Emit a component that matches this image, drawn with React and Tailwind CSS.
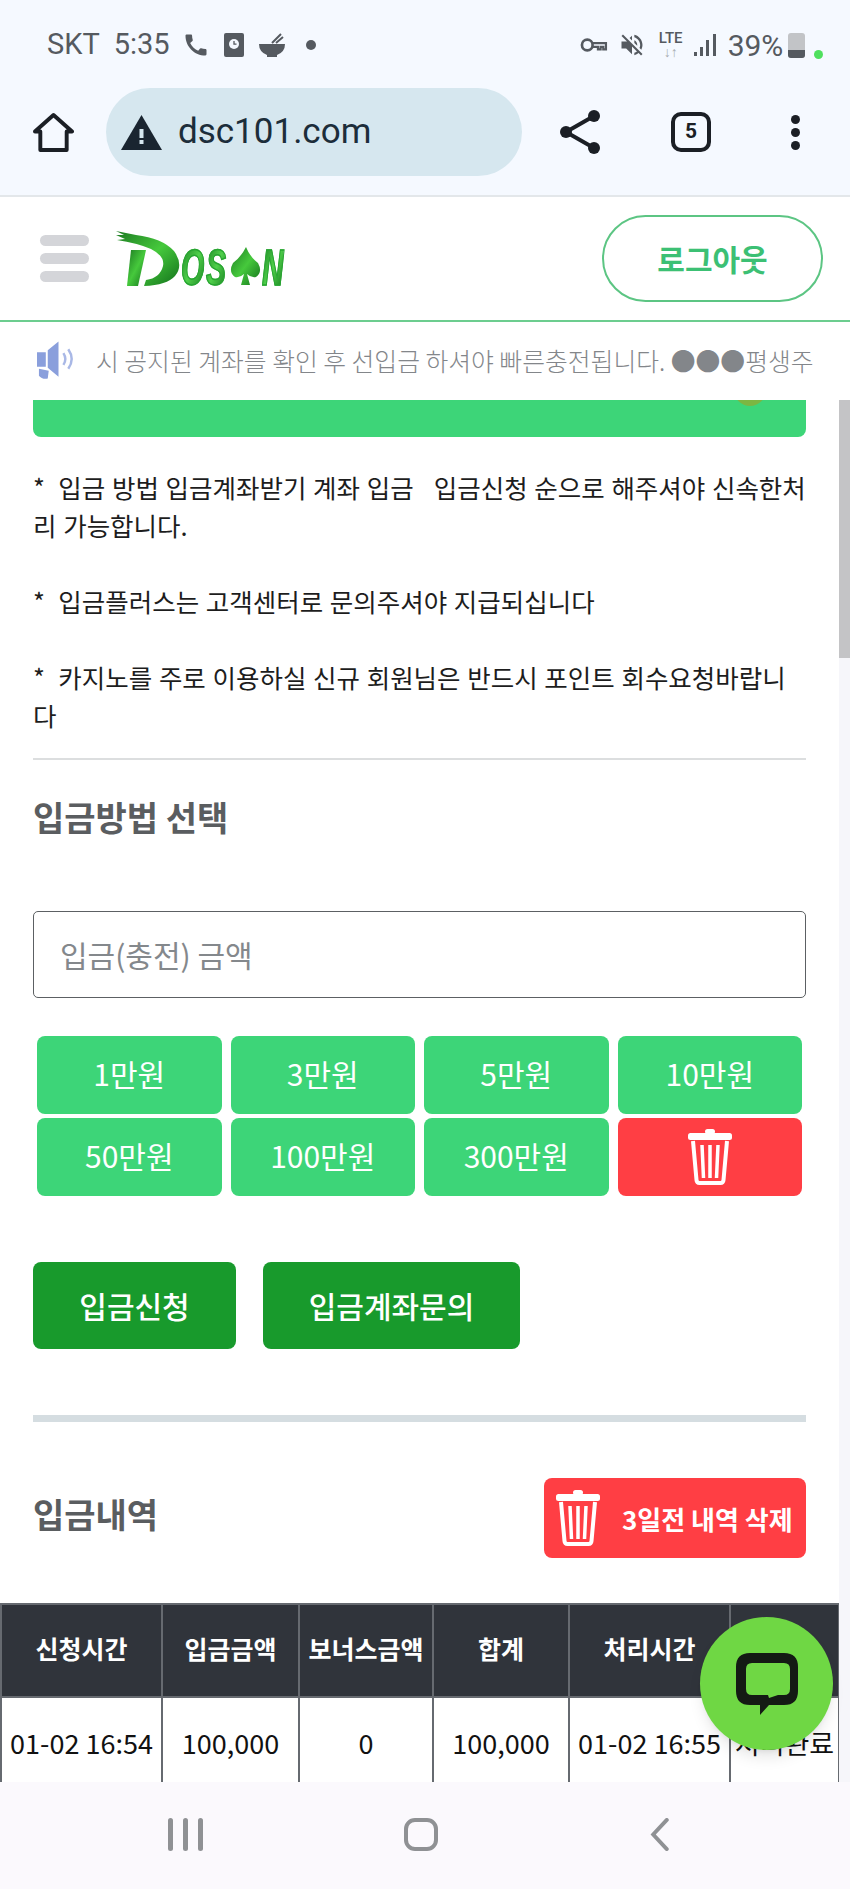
import { MdCall, MdVolumeOff } from 'react-icons/md'

const font = { fontFamily: '"Noto Sans CJK KR", "Noto Sans", sans-serif' }

const AMOUNTS = ['1만원', '3만원', '5만원', '10만원', '50만원', '100만원', '300만원']
const HEAD = ['신청시간', '입금금액', '보너스금액', '합계', '처리시간', '상태']
const ROW = ['01-02 16:54', '100,000', '0', '100,000', '01-02 16:55', '처리완료']
const COLS = ['w-[161px]', 'w-[137px]', 'w-[134px]', 'w-[136px]', 'w-[161px]', 'w-[109px]']

function Trash({ className }) {
  return (
    <svg viewBox="0 0 44 56" className={className} fill="none" stroke="currentColor">
      <rect x="17" y="0" width="10" height="5" rx="2.500" fill="currentColor" stroke="none" />
      <rect x="0" y="4" width="44" height="7" rx="2.500" fill="currentColor" stroke="none" />
      <path d="M5 12l3.500 39q.3 3 3 3h21q2.700 0 3-3L39 12" strokeWidth="4" />
      <path d="M14 16l1.500 33M22 16v33M30 16l-1.500 33" strokeWidth="3.500" />
    </svg>
  )
}

function StatusBar() {
  return (
    <div className="flex items-center h-[89px] pl-[47px] pt-[1px] text-[#555a60] text-[29px]" style={{ fontFamily: 'Roboto, sans-serif' }}>
      <span>SKT</span>
      <span className="ml-[14px]">5:35</span>
      <MdCall className="ml-[12px] w-[28px] h-[28px]" />
      <svg viewBox="0 0 20 24" className="ml-[14px] w-[20px] h-[24px]">
        <rect width="20" height="24" rx="2" fill="#555a60" />
        <circle cx="10" cy="11" r="5" fill="#f5f9ff" />
        <path d="M10 8v3.200h2.500" stroke="#555a60" strokeWidth="1.300" fill="none" />
      </svg>
      <svg viewBox="0 0 28 28" className="ml-[14px] w-[28px] h-[28px]">
        <path d="M1 13h26q0 8-8 11v2H9v-2q-8-3-8-11z" fill="#555a60" />
        <path d="M14 12L23 3M18 12l7-6" stroke="#555a60" strokeWidth="2" />
      </svg>
      <span className="ml-[20px] w-[10px] h-[10px] rounded-full bg-[#555a60]" />
      <svg viewBox="0 0 30 18" className="ml-[263px] w-[29px] h-[16px]" fill="none" stroke="#555a60" strokeWidth="3">
        <circle cx="8" cy="9" r="6" />
        <path d="M14 7h15v7h-3v-3h-3v3h-3v-3h-6" strokeWidth="2.500" />
      </svg>
      <MdVolumeOff className="ml-[10px] w-[28px] h-[28px]" />
      <div className="ml-[11px] w-[28px] flex flex-col items-center leading-none">
        <span className="text-[15px] font-medium">LTE</span>
        <span className="text-[14px] text-[#a9adb1] -mt-[1px]">↓↑</span>
      </div>
      <svg viewBox="0 0 22 22" className="ml-[9px] w-[22px] h-[22px]" fill="#555a60">
        <rect x="0" y="18" width="3" height="4" />
        <rect x="6" y="13" width="3" height="9" />
        <rect x="12" y="6" width="3" height="16" />
        <rect x="19" y="0" width="3" height="22" />
      </svg>
      <span className="ml-[12px] text-[30px]">39%</span>
      <div className="ml-[5px] w-[17px] h-[25px] rounded-[3px] overflow-hidden flex flex-col bg-[#c2c4c7]">
        <div className="mt-auto h-[8px] bg-[#555a60]" />
      </div>
      <span className="ml-[9px] mt-[18px] w-[9px] h-[9px] rounded-full bg-[#4fe05e]" />
    </div>
  )
}

function BrowserBar() {
  return (
    <div className="flex items-center h-[108px] pb-[20px] pl-[33px] text-[#1b1f25] border-b-2 border-[#e3e7ea]">
      <svg viewBox="0 0 42 42" className="w-[41px] h-[41px]" fill="none" stroke="currentColor" strokeWidth="4" strokeLinejoin="round">
        <path d="M2 20L21 3l19 17h-5.500v19h-27V20z" />
      </svg>
      <div className="ml-[32px] w-[416px] h-[88px] rounded-full bg-[#d6e7ef] flex items-center pl-[15px]">
        <svg viewBox="0 0 41 35" className="w-[41px] h-[35px]">
          <path d="M20.500 0L41 35H0z" fill="#1a2530" />
          <rect x="18.500" y="14" width="4" height="9" fill="#d6e7ef" />
          <rect x="18.500" y="25" width="4" height="4" fill="#d6e7ef" />
        </svg>
        <span className="ml-[16px] text-[35px] text-[#1c2d3a]" style={{ fontFamily: 'Roboto, sans-serif' }}>dsc101.com</span>
      </div>
      <svg viewBox="0 0 40 44" className="ml-[38px] w-[40px] h-[44px]" fill="currentColor">
        <circle cx="6" cy="22" r="6" />
        <circle cx="34" cy="6" r="6" />
        <circle cx="34" cy="38" r="6" />
        <path d="M6 22L34 6M6 22l28 16" stroke="currentColor" strokeWidth="4" />
      </svg>
      <div className="ml-[71px] w-[40px] h-[40px] rounded-[10px] border-[4px] border-[#1b1f25] flex items-center justify-center text-[21px] font-bold" style={{ fontFamily: 'Roboto, sans-serif' }}>5</div>
      <div className="ml-[80px] flex flex-col gap-[4px]">
        <span className="w-[9px] h-[9px] rounded-full bg-[#1b1f25]" />
        <span className="w-[9px] h-[9px] rounded-full bg-[#1b1f25]" />
        <span className="w-[9px] h-[9px] rounded-full bg-[#1b1f25]" />
      </div>
    </div>
  )
}

function Logo() {
  const letter = 'absolute top-[13px] origin-left scale-x-[0.6] text-[50px] leading-[50px] font-bold italic bg-linear-to-br from-[#177f22] via-[#4fd04a] to-[#137a1e] bg-clip-text text-transparent [-webkit-text-stroke:1.5px_#28a532]'
  return (
    <div className="relative ml-[26px] w-[176px] h-[58px]" style={{ fontFamily: '"Liberation Sans", sans-serif' }}>
      <svg viewBox="0 0 176 58" className="absolute inset-0 w-full h-full">
        <defs>
          <linearGradient id="brush" x1="0" y1="0" x2="1" y2="1">
            <stop offset="0" stopColor="#1c7a22" />
            <stop offset="0.5" stopColor="#46c93c" />
            <stop offset="1" stopColor="#12701b" />
          </linearGradient>
        </defs>
        <path d="M1 1l20 4q26 3 38 16 10 14 1 25-8 9-31 10l2-6q14-2 17-14 2-10-12-17-14-6-34-9l8-1-9-4 8 0z" fill="url(#brush)" />
        <path d="M16 20h15l-8 36H12z" fill="url(#brush)" />
        <path d="M131 17q4 10 12 16 5 9-2 14-5 1-9-3l3 11h-9l3-11q-4 4-9 3-7-5-2-14 8-6 13-16z" fill="url(#brush)" />
      </svg>
      <span className={`${letter} left-[66px]`}>O</span>
      <span className={`${letter} left-[91px]`}>S</span>
      <span className={`${letter} left-[147px]`}>N</span>
    </div>
  )
}

function Header() {
  return (
    <div className="flex items-center h-[125px] pl-[40px] pr-[27px] bg-white border-b-2 border-[#6ccd8f]">
      <div className="flex flex-col gap-[7px]">
        <span className="w-[49px] h-[11px] rounded-full bg-[#d4d5d9]" />
        <span className="w-[49px] h-[11px] rounded-full bg-[#d4d5d9]" />
        <span className="w-[49px] h-[11px] rounded-full bg-[#d4d5d9]" />
      </div>
      <Logo />
      <button className="ml-auto w-[221px] h-[87px] rounded-full border-2 border-[#5cc583] text-[#3cc074] text-[30px] font-bold">로그아웃</button>
    </div>
  )
}

function Notice() {
  return (
    <div className="flex items-center h-[78px] pl-[37px] pr-[30px] bg-white">
      <svg viewBox="0 0 44 40" className="w-[43px] h-[40px] shrink-0">
        <path d="M0 11h9v15H0zM11 9l11-9v36l-11-9z" fill="#8a9fdc" />
        <path d="M2 28l10 2-1 8q-6 1-9-3z" fill="#8a9fdc" />
        <path d="M27 12q4 6 0 12M32 8q7 10 0 20" stroke="#a9b8e6" strokeWidth="2.500" fill="none" />
      </svg>
      <div className="ml-[16px] whitespace-nowrap text-[24.800px] text-[#83868a] font-light">시 공지된 계좌를 확인 후 선입금 하셔야 빠른충전됩니다. ●●●평생주</div>
    </div>
  )
}

function Content() {
  return (
    <div className="flex-1 min-h-0 relative overflow-hidden bg-white">
      <div className="absolute right-0 top-0 w-[11px] h-full bg-[#f6f6fa]">
        <div className="w-full h-[258px] bg-[#c4c4c6]" />
      </div>

      <div className="pl-[33px] pr-[44px]">
        <div className="h-[37px] rounded-b-[8px] bg-[#3dd578] overflow-hidden relative">
          <div className="absolute left-[29px] -top-[33px] text-[24px] leading-[38px] text-white">계좌 문의 후 입금 하세요</div>
          <div className="absolute right-[40px] -top-[26px] w-[32px] h-[32px] rounded-full bg-[#7cb642]" />
        </div>

        <div className="mt-[31px] text-[25.500px] leading-[38px] [word-spacing:1px] text-[#1d1d1d] whitespace-pre-wrap">
          *  입금 방법 입금계좌받기 계좌 입금   입금신청 순으로 해주셔야 신속한처리 가능합니다.
          <br /><br />
          *  입금플러스는 고객센터로 문의주셔야 지급되십니다
          <br /><br />
          *  카지노를 주로 이용하실 신규 회원님은 반드시 포인트 회수요청바랍니다
        </div>

        <div className="mt-[24px] h-[2px] bg-[#dcdedf]" />
        <h2 className="mt-[33px] text-[34px] leading-[48px] font-bold text-[#5a5d60]">입금방법 선택</h2>

        <div className="mt-[70px] h-[87px] rounded-[5px] border-[1.500px] border-[#5c6063] flex items-center pl-[26px] text-[30px] text-[#84888c]">입금(충전) 금액</div>

        <div className="mt-[38px] px-[4px] grid grid-cols-4 gap-x-[9px] gap-y-[4px]">
          {AMOUNTS.map(a => (
            <button key={a} className="h-[78px] pb-[4px] rounded-[8px] bg-[#3dd578] text-white text-[30px]">{a}</button>
          ))}
          <button className="h-[78px] rounded-[8px] bg-[#ff3e44] text-white flex items-center justify-center">
            <Trash className="w-[44px] h-[56px]" />
          </button>
        </div>

        <div className="mt-[66px] flex gap-[27px]">
          <button className="w-[203px] h-[87px] rounded-[8px] bg-[#189a2c] text-white text-[30px] font-medium">입금신청</button>
          <button className="w-[257px] h-[87px] rounded-[8px] bg-[#189a2c] text-white text-[30px] font-medium">입금계좌문의</button>
        </div>

        <div className="mt-[66px] h-[7px] bg-[#d5dde1]" />

        <div className="mt-[56px] flex items-center justify-between">
          <h2 className="mb-[10px] text-[34px] font-bold text-[#5a5d60]">입금내역</h2>
          <button className="w-[262px] h-[80px] rounded-[8px] bg-[#ff3e44] text-white flex items-center pl-[12px]">
            <Trash className="w-[44px] h-[56px]" />
            <span className="ml-[22px] text-[26px] font-bold whitespace-nowrap">3일전 내역 삭제</span>
          </button>
        </div>
      </div>

      <table className="mt-[45px] w-[838px] table-fixed border-collapse">
        <thead>
          <tr className="bg-[#30343b] text-white">
            {HEAD.map((h, i) => (
              <th key={h} className={`${COLS[i]} h-[93px] pb-[4px] border-2 border-[#666a70] text-[25px] font-bold whitespace-nowrap`}>{h}</th>
            ))}
          </tr>
        </thead>
        <tbody>
          <tr>
            {ROW.map((c, i) => (
              <td key={i} className="h-[93px] border-2 border-[#666a70] text-center text-[27px] text-[#111] whitespace-nowrap">{c}</td>
            ))}
          </tr>
        </tbody>
      </table>
    </div>
  )
}

function NavBar() {
  return (
    <div className="h-[107px] bg-[#fbf9fd] flex items-start pt-[36px] pl-[168px]">
      <div className="flex gap-[10px]">
        <span className="w-[5px] h-[33px] rounded-full bg-[#8f9194]" />
        <span className="w-[5px] h-[33px] rounded-full bg-[#8f9194]" />
        <span className="w-[5px] h-[33px] rounded-full bg-[#8f9194]" />
      </div>
      <span className="ml-[201px] w-[34px] h-[33px] rounded-[11px] border-[4.500px] border-[#8f9194]" />
      <svg viewBox="0 0 20 34" className="ml-[212px] w-[20px] h-[33px]" fill="none" stroke="#8f9194" strokeWidth="4" strokeLinecap="round">
        <path d="M17 2L3 17l14 15" />
      </svg>
    </div>
  )
}

export default function App() {
  return (
    <div className="relative w-[850px] h-[1889px] overflow-hidden flex flex-col bg-[#f5f9ff]" style={font}>
      <StatusBar />
      <BrowserBar />
      <Header />
      <Notice />
      <Content />
      <NavBar />
      <button className="absolute left-[700px] top-[1617px] w-[133px] h-[133px] rounded-full bg-[#6fd744] shadow-lg flex items-center justify-center">
        <svg viewBox="0 0 62 62" className="w-[62px] h-[62px]">
          <path d="M14 0h34q14 0 14 14v24q0 14-14 14H33L24 62V52H14Q0 52 0 38V14Q0 0 14 0zm2 10q-6 0-6 6v20q0 6 6 6h16l1 3 9-3h6q6 0 6-6V16q0-6-6-6z" fill="#141a14" fillRule="evenodd" />
        </svg>
      </button>
    </div>
  )
}
